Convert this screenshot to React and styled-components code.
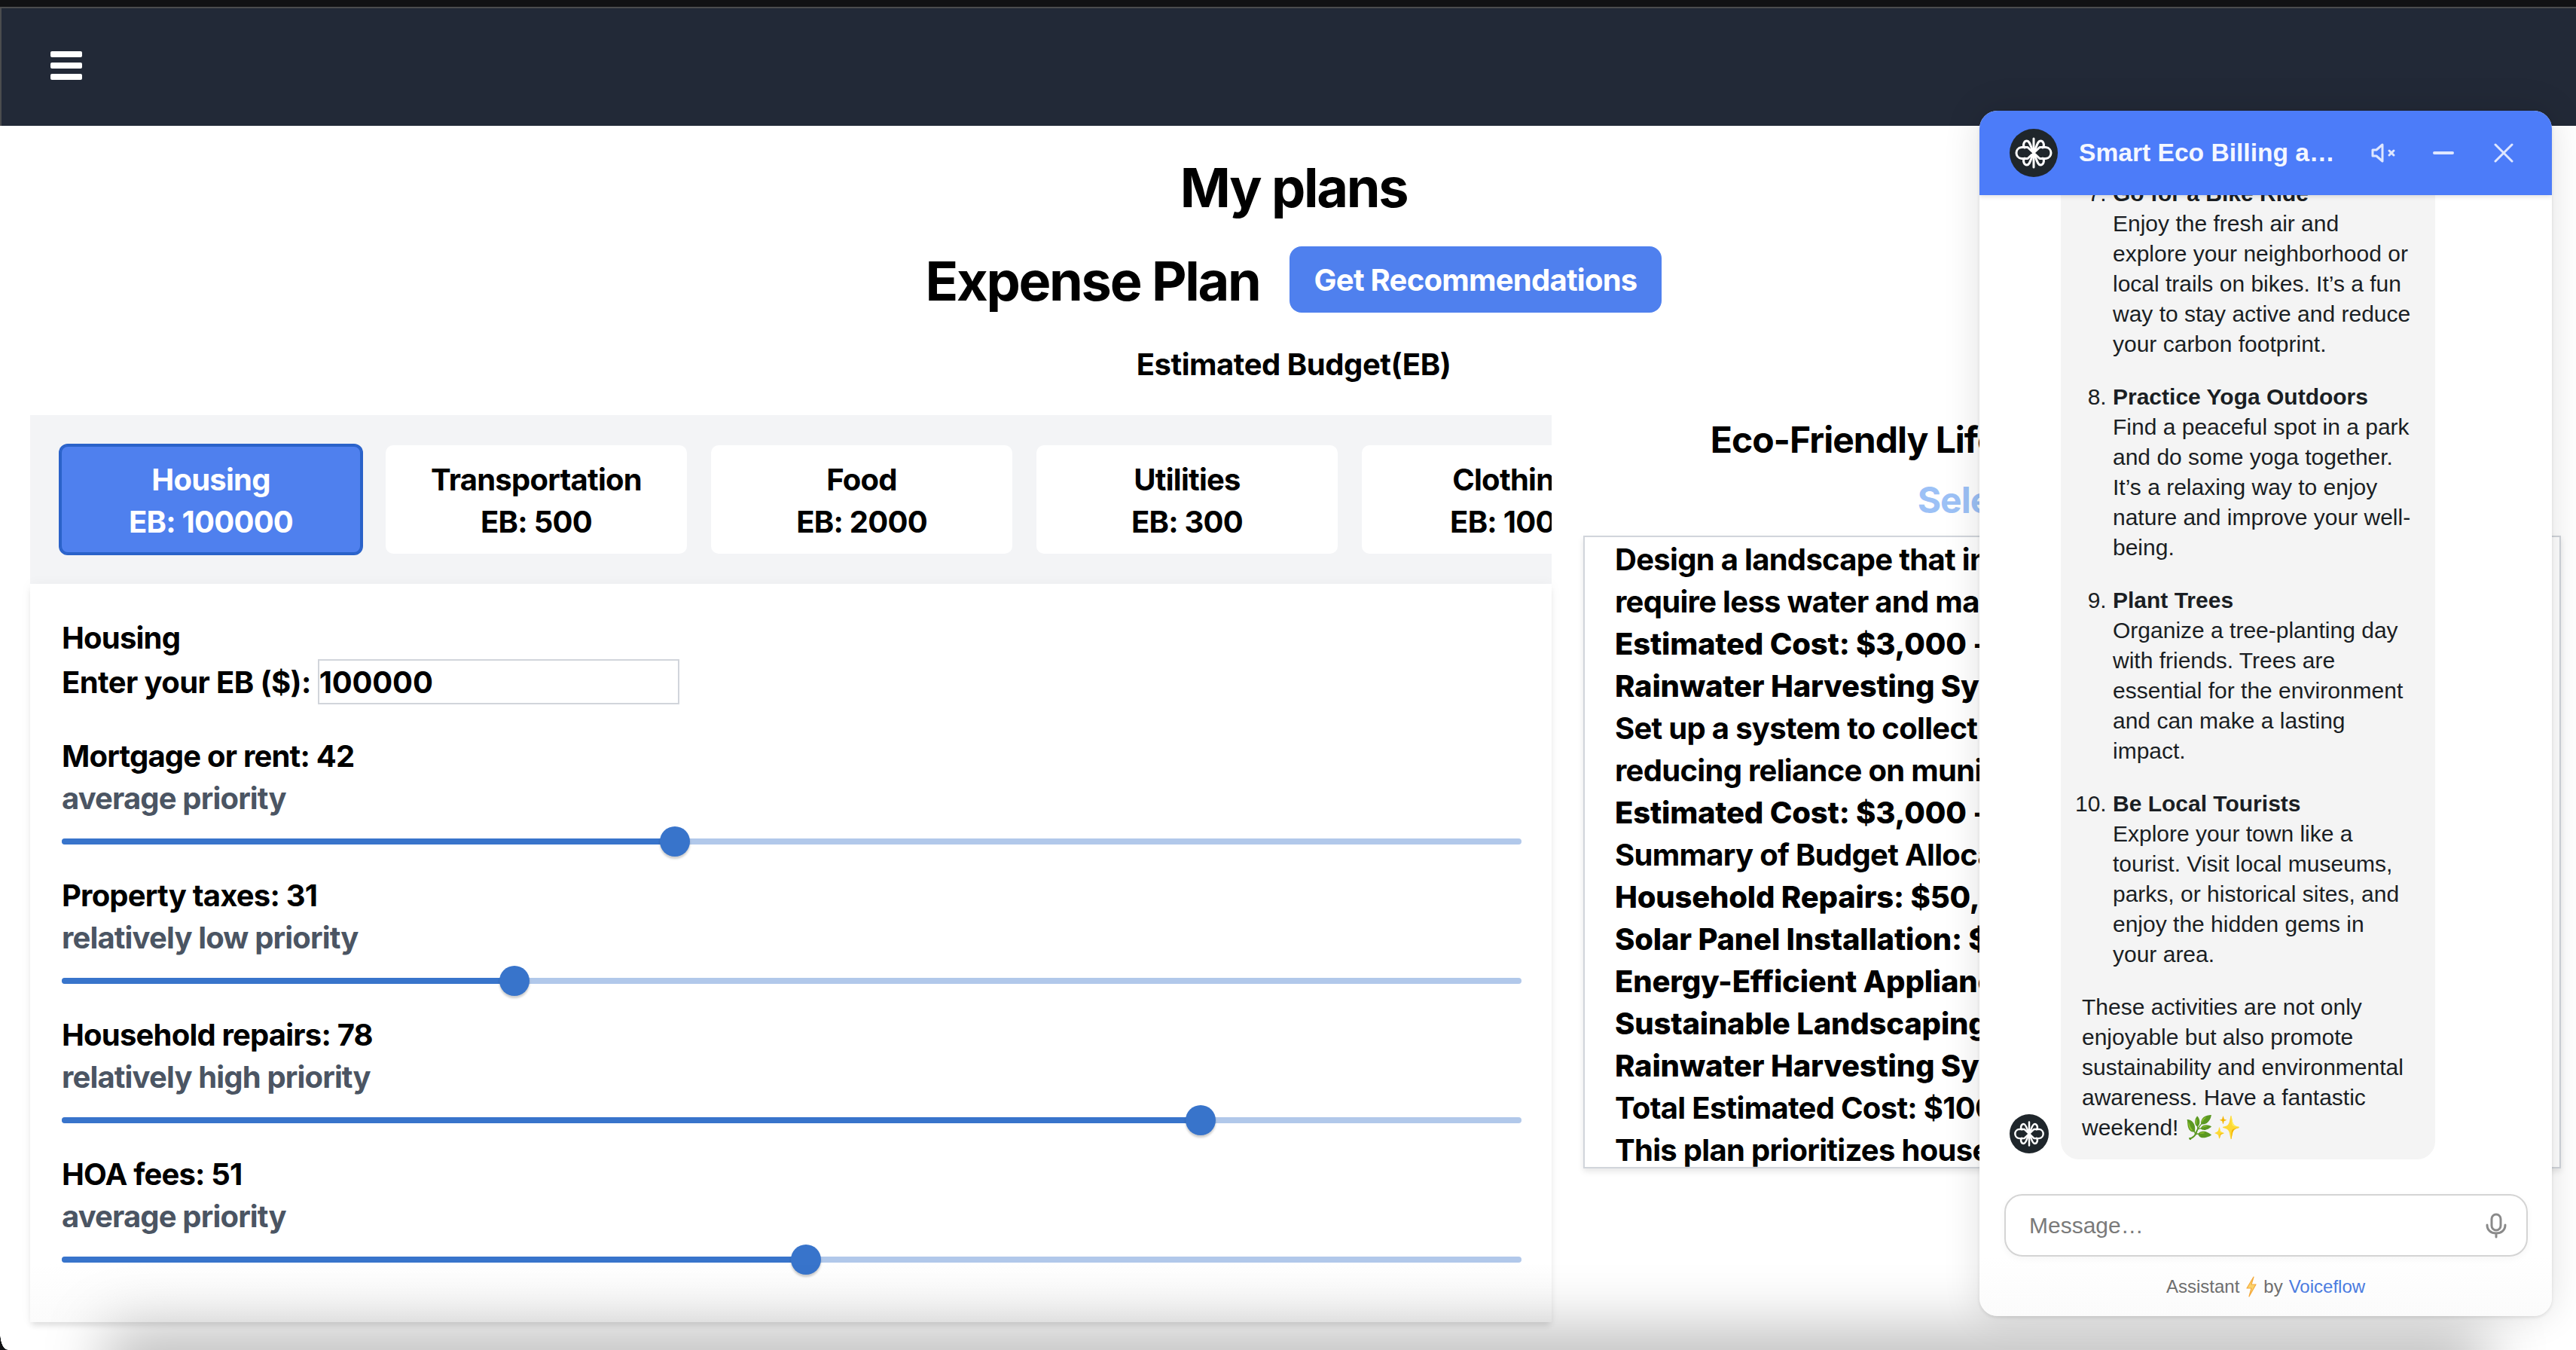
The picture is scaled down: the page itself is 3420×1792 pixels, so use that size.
import styled, { createGlobalStyle } from "styled-components";

const GlobalStyle = createGlobalStyle`
  * {
    box-sizing: border-box;
  }
  html, body {
    margin: 0;
    padding: 0;
    background: #ffffff;
  }
  body {
    font-family: Inter, "Noto Sans", sans-serif;
    color: #000000;
    -webkit-font-smoothing: antialiased;
  }
`;

const Page = styled.div`
  position: relative;
  width: 3420px;
  height: 1792px;
  overflow: hidden;
  background: #ffffff;
`;

const WindowEdge = styled.div`
  height: 9px;
  background: #111214;
`;

const Nav = styled.nav`
  height: 158px;
  display: flex;
  align-items: center;
  padding: 0 0 4px 65px;
  background: #222937;
  border-top: 2px solid #4b4c4e;
  border-left: 2px solid #4b4c4e;
`;

const MenuButton = styled.div`
  display: flex;
  flex-direction: column;
  gap: 7px;
  width: 42px;
`;

const MenuBar = styled.span`
  display: block;
  height: 8px;
  border-radius: 2px;
  background: #ffffff;
`;

const Main = styled.main`
  padding: 0 20px 0 40px;
`;

const Heading = styled.header`
  display: flex;
  flex-direction: column;
  align-items: center;
  padding: 42px 5px 0 0;
`;

const Title = styled.h1`
  margin: 0;
  font-size: 72px;
  line-height: 80px;
  font-weight: 700;
  letter-spacing: -2.3px;
`;

const PlanTitle = styled(Title)`
  padding-top: 3px;
`;

const PlanRow = styled.div`
  display: flex;
  align-items: center;
  gap: 39px;
  margin-top: 38px;
`;

const RecommendButton = styled.button`
  height: 88px;
  padding: 0 33px;
  border: none;
  border-radius: 16px;
  background: #4f80ee;
  color: #ffffff;
  font-family: inherit;
  font-size: 40px;
  font-weight: 650;
  letter-spacing: -0.75px;
`;

const BudgetLabel = styled.div`
  margin-top: 41px;
  font-size: 40px;
  line-height: 56px;
  font-weight: 650;
  letter-spacing: -0.45px;
`;

const Columns = styled.div`
  display: flex;
  gap: 42px;
  margin-top: 39px;
`;

const LeftColumn = styled.section`
  flex: 0 0 2020px;
  width: 2020px;
`;

const TabPanel = styled.div`
  display: flex;
  gap: 32px;
  height: 224px;
  padding: 40px;
  background: #f3f4f6;
  overflow: hidden;
`;

const Tab = styled.div`
  flex: 0 0 400px;
  height: 144px;
  padding: 18px 0 14px;
  border-radius: 10px;
  text-align: center;
  font-size: 40px;
  line-height: 56px;
  font-weight: 650;
  letter-spacing: -0.75px;
  background: ${({ $active }) => ($active ? "#4f80ee" : "#ffffff")};
  color: ${({ $active }) => ($active ? "#ffffff" : "#000000")};
  box-shadow: ${({ $active }) =>
    $active ? "0 0 0 2px #2a62c9, inset 0 0 0 2px #2a62c9" : "none"};
`;

const Card = styled.div`
  height: 980px;
  padding: 44px 40px 0 42px;
  background: linear-gradient(#ffffff 92%, #fbfbfb);
  box-shadow: 0 6px 8px -2px rgba(0, 0, 0, 0.12), 0 0 16px rgba(0, 0, 0, 0.04);
`;

const TextLine = styled.div`
  font-size: 40px;
  line-height: 56px;
  font-weight: 650;
  letter-spacing: ${({ $muted }) => ($muted ? "-0.85px" : "-0.8px")};
  color: ${({ $muted }) => ($muted ? "#4b5563" : "#000000")};
`;

const BudgetRow = styled.label`
  display: flex;
  align-items: center;
  gap: 9px;
  height: 60px;
  margin: 0 0 41px;
  font-size: 40px;
  font-weight: 650;
  letter-spacing: -0.6px;
`;

const BudgetInput = styled.input`
  width: 480px;
  height: 60px;
  padding: 0 2px 0 0;
  border: 2px solid #d1d5db;
  border-radius: 0;
  outline: none;
  font-family: inherit;
  font-size: 40px;
  font-weight: 650;
  letter-spacing: -0.2px;
  color: #000000;
`;

const SliderGroup = styled.div`
  height: 185px;
`;

const Slider = styled.div`
  position: relative;
  height: 40px;
  margin-top: 9px;
`;

const SliderRail = styled.div`
  position: absolute;
  top: 16px;
  left: 0;
  right: 0;
  height: 8px;
  border-radius: 4px;
  background: #b1c8ea;
`;

const SliderFill = styled.div`
  position: absolute;
  top: 16px;
  left: 0;
  height: 8px;
  border-radius: 4px;
  background: #3874cb;
`;

const SliderThumb = styled.div`
  position: absolute;
  top: 0;
  width: 40px;
  height: 40px;
  margin-left: -20px;
  border-radius: 50%;
  background: #3874cb;
  box-shadow: 0 3px 3px rgba(0, 0, 0, 0.2);
`;

const RightColumn = styled.section`
  flex: 1;
  min-width: 0;
  display: flex;
  flex-direction: column;
  align-items: center;
`;

const EcoTitle = styled.h2`
  margin: 1px 34px 0 0;
  font-size: 48px;
  line-height: 64px;
  font-weight: 650;
  letter-spacing: -1px;
  white-space: nowrap;
`;

const SelectLabel = styled.div`
  margin: 16px 46px 0 0;
  font-size: 48px;
  line-height: 64px;
  font-weight: 700;
  letter-spacing: -1px;
  color: #9cc1f6;
  white-space: nowrap;
`;

const PlanText = styled.div`
  width: 100%;
  height: 840px;
  margin-top: 15px;
  padding: 2px 0 0 40px;
  border: 2px solid #d1d5db;
  overflow: hidden;
  box-shadow: 0 4px 8px rgba(0, 0, 0, 0.1);
`;

const PlanLine = styled.div`
  font-size: 40px;
  line-height: 56px;
  font-weight: ${({ $strong }) => ($strong ? 800 : 650)};
  letter-spacing: ${({ $strong }) => ($strong ? "-0.2px" : "-0.7px")};
  white-space: nowrap;
`;

const BottomShade = styled.div`
  position: absolute;
  left: 170px;
  right: 150px;
  bottom: -50px;
  height: 50px;
  box-shadow: 0 0 80px 30px rgba(0, 0, 0, 0.25);
`;

const WindowCorner = styled.div`
  position: absolute;
  left: 0;
  bottom: 0;
  width: 10px;
  height: 22px;
  background: radial-gradient(ellipse 10px 22px at 100% 0, transparent 96%, #111214 100%);
`;

const Chat = styled.aside`
  position: absolute;
  top: 147px;
  right: 32px;
  width: 760px;
  height: 1600px;
  display: flex;
  flex-direction: column;
  border-radius: 24px;
  overflow: hidden;
  background: linear-gradient(#ffffff 95%, #fbfbfb);
  box-shadow: 0 0 50px rgba(0, 0, 0, 0.12), 0 2px 4px rgba(0, 0, 0, 0.1);
  font-family: "Liberation Sans", Arial, sans-serif;
  color: #1a1e23;
`;

const ChatHeader = styled.div`
  flex: 0 0 112px;
  display: flex;
  align-items: center;
  padding: 0 0 0 40px;
  background: #4c7cf9;
  box-shadow: 0 2px 6px rgba(0, 0, 0, 0.12);
  position: relative;
  z-index: 1;
`;

const ChatTitle = styled.div`
  width: 345px;
  margin-left: 28px;
  font-size: 33.6px;
  font-weight: 700;
  color: #f4f7ff;
  white-space: nowrap;
  overflow: hidden;
  text-overflow: ellipsis;
`;

const HeaderIcon = styled.svg`
  display: block;
  fill: none;
  stroke: #dfe7ff;
  stroke-width: 3;
  stroke-linecap: round;
  stroke-linejoin: round;
  margin-left: ${({ $gap }) => $gap}px;
`;

const Messages = styled.div`
  flex: 1;
  min-height: 0;
  display: flex;
  flex-direction: column;
  justify-content: flex-end;
  overflow: hidden;
  padding: 0 0 46px 40px;
`;

const MessageRow = styled.div`
  display: flex;
  align-items: flex-end;
  gap: 16px;
`;

const Avatar = styled.svg`
  display: block;
  flex: none;
  margin-bottom: ${({ $lift }) => $lift || 0}px;
`;

const Bubble = styled.div`
  width: 497px;
  padding: 22px 28px;
  border-radius: 24px;
  background: #f4f4f4;
  font-size: 30px;
  line-height: 40px;
`;

const Steps = styled.ol`
  margin: 0 0 30px;
  padding: 0 0 0 41px;
`;

const Step = styled.li`
  margin-bottom: 30px;
  &:last-child {
    margin-bottom: 0;
  }
`;

const StepName = styled.strong`
  display: block;
  font-weight: 700;
`;

const Composer = styled.div`
  flex: 0 0 83px;
  display: flex;
  align-items: center;
  margin: 0 32px 0 33px;
  padding: 0 26px 0 29px;
  border: 2px solid #d4d4d4;
  border-radius: 24px;
  box-shadow: 0 3px 10px rgba(0, 0, 0, 0.04);
`;

const MessageInput = styled.input`
  flex: 1;
  min-width: 0;
  border: none;
  outline: none;
  background: transparent;
  font-family: inherit;
  font-size: 30px;
  color: #1a1e23;
  &::placeholder {
    color: #7a7a7a;
    opacity: 1;
  }
`;

const MicIcon = styled.svg`
  display: block;
  flex: none;
  fill: none;
  stroke: #8a8a8a;
  stroke-width: 3;
  stroke-linecap: round;
`;

const ChatFooter = styled.div`
  flex: 0 0 79px;
  display: flex;
  align-items: center;
  justify-content: center;
  gap: 8px;
  font-size: 24px;
  color: #6e6e6e;
`;

const FooterLink = styled.span`
  color: #4a7be0;
`;

const BoltIcon = styled.svg`
  display: block;
  fill: #fbd26a;
  stroke: #f4a93c;
  stroke-width: 1.2;
  stroke-linejoin: round;
`;

const tabs = [
  { name: "Housing", budget: 100000, active: true },
  { name: "Transportation", budget: 500 },
  { name: "Food", budget: 2000 },
  { name: "Utilities", budget: 300 },
  { name: "Clothing", budget: 1000 },
];

const expenses = [
  { name: "Mortgage or rent", value: 42, priority: "average priority" },
  { name: "Property taxes", value: 31, priority: "relatively low priority" },
  { name: "Household repairs", value: 78, priority: "relatively high priority" },
  { name: "HOA fees", value: 51, priority: "average priority" },
];

const planLines = [
  ["Design a landscape that incorporates native plants, which"],
  ["require less water and maintenance."],
  ["Estimated Cost: $3,000 - $5,000", true],
  ["Rainwater Harvesting System", true],
  ["Set up a system to collect rainwater for irrigation,"],
  ["reducing reliance on municipal water."],
  ["Estimated Cost: $3,000 - $5,000", true],
  ["Summary of Budget Allocation"],
  ["Household Repairs: $50,000", true],
  ["Solar Panel Installation: $25,000", true],
  ["Energy-Efficient Appliances: $10,000", true],
  ["Sustainable Landscaping: $10,000", true],
  ["Rainwater Harvesting System: $5,000", true],
  ["Total Estimated Cost: $100,000"],
  ["This plan prioritizes household repairs and efficiency."],
];

const steps = [
  {
    name: "Go for a Bike Ride",
    text: "Enjoy the fresh air and explore your neighborhood or local trails on bikes. It’s a fun way to stay active and reduce your carbon footprint.",
  },
  {
    name: "Practice Yoga Outdoors",
    text: "Find a peaceful spot in a park and do some yoga together. It’s a relaxing way to enjoy nature and improve your well-being.",
  },
  {
    name: "Plant Trees",
    text: "Organize a tree-planting day with friends. Trees are essential for the environment and can make a lasting impact.",
  },
  {
    name: "Be Local Tourists",
    text: "Explore your town like a tourist. Visit local museums, parks, or historical sites, and enjoy the hidden gems in your area.",
  },
];

function Logo({ size, lift }) {
  return (
    <Avatar $lift={lift} width={size} height={size} viewBox="0 0 64 64">
      <circle cx="32" cy="32" r="32" fill="#1f262b" />
      <g fill="none" stroke="#ffffff" strokeWidth="3" strokeLinecap="round" strokeLinejoin="round">
        <path d="M32 13V51" />
        <path d="M32 32C28 24 27 16 23 16C19 16 17 22 20 25" />
        <path d="M32 32C36 24 37 16 41 16C45 16 47 22 44 25" />
        <path d="M32 32C28 40 27 48 23 48C19 48 17 42 20 39" />
        <path d="M32 32C36 40 37 48 41 48C45 48 47 42 44 39" />
        <path d="M32 32L24 24.5H16C11 25 9 29 9 32C9 35 11 39 16 39.5H24Z" />
        <path d="M32 32L40 24.5H48C53 25 55 29 55 32C55 35 53 39 48 39.5H40Z" />
      </g>
    </Avatar>
  );
}

function App() {
  return (
    <Page>
      <GlobalStyle />
      <WindowEdge />
      <Nav>
        <MenuButton>
          <MenuBar />
          <MenuBar />
          <MenuBar />
        </MenuButton>
      </Nav>
      <Main>
        <Heading>
          <Title>My plans</Title>
          <PlanRow>
            <PlanTitle as="h2">Expense Plan</PlanTitle>
            <RecommendButton>Get Recommendations</RecommendButton>
          </PlanRow>
          <BudgetLabel>Estimated Budget(EB)</BudgetLabel>
        </Heading>
        <Columns>
          <LeftColumn>
            <TabPanel>
              {tabs.map((tab) => (
                <Tab key={tab.name} $active={tab.active}>
                  {tab.name}
                  <br />
                  EB: {tab.budget}
                </Tab>
              ))}
            </TabPanel>
            <Card>
              <TextLine>Housing</TextLine>
              <BudgetRow>
                Enter your EB ($):
                <BudgetInput defaultValue="100000" />
              </BudgetRow>
              {expenses.map((expense) => (
                <SliderGroup key={expense.name}>
                  <TextLine>
                    {expense.name}: {expense.value}
                  </TextLine>
                  <TextLine $muted>{expense.priority}</TextLine>
                  <Slider>
                    <SliderRail />
                    <SliderFill style={{ width: `${expense.value}%` }} />
                    <SliderThumb style={{ left: `${expense.value}%` }} />
                  </Slider>
                </SliderGroup>
              ))}
            </Card>
          </LeftColumn>
          <RightColumn>
            <EcoTitle>Eco-Friendly Lifestyle Recommendations</EcoTitle>
            <SelectLabel>Select Your Plan</SelectLabel>
            <PlanText>
              {planLines.map(([text, strong], index) => (
                <PlanLine key={index} $strong={strong}>
                  {text}
                </PlanLine>
              ))}
            </PlanText>
          </RightColumn>
        </Columns>
      </Main>
      <BottomShade />
      <WindowCorner />
      <Chat>
        <ChatHeader>
          <Logo size={64} />
          <ChatTitle>Smart Eco Billing assistant</ChatTitle>
          <HeaderIcon $gap={43} width="34" height="26" viewBox="0 0 34 26">
            <path d="M2 9V17H7L15 24V2L7 9Z" />
            <path d="M24 10L30 16M30 10L24 16" />
          </HeaderIcon>
          <HeaderIcon $gap={48} width="28" height="6" viewBox="0 0 28 6">
            <path d="M2 3H26" strokeWidth="4" />
          </HeaderIcon>
          <HeaderIcon $gap={53} width="26" height="26" viewBox="0 0 26 26">
            <path d="M2 2L24 24M24 2L2 24" />
          </HeaderIcon>
        </ChatHeader>
        <Messages>
          <MessageRow>
            <Logo size={52} lift={8} />
            <Bubble>
              <Steps start={7}>
                {steps.map((step) => (
                  <Step key={step.name}>
                    <StepName>{step.name}</StepName>
                    {step.text}
                  </Step>
                ))}
              </Steps>
              These activities are not only enjoyable but also promote sustainability and environmental awareness. Have a fantastic weekend! 🌿✨
            </Bubble>
          </MessageRow>
        </Messages>
        <Composer>
          <MessageInput placeholder="Message…" />
          <MicIcon width="28" height="34" viewBox="0 0 28 34">
            <rect x="8" y="2" width="12" height="21" rx="6" />
            <path d="M2 16C2 23 7 27 14 27C21 27 26 23 26 16M14 27V32" />
          </MicIcon>
        </Composer>
        <ChatFooter>
          Assistant
          <BoltIcon width="16" height="28" viewBox="0 0 16 28">
            <path d="M11 1L2 16H8L5 27L14 11H8Z" />
          </BoltIcon>
          by <FooterLink>Voiceflow</FooterLink>
        </ChatFooter>
      </Chat>
    </Page>
  );
}

export default App;
